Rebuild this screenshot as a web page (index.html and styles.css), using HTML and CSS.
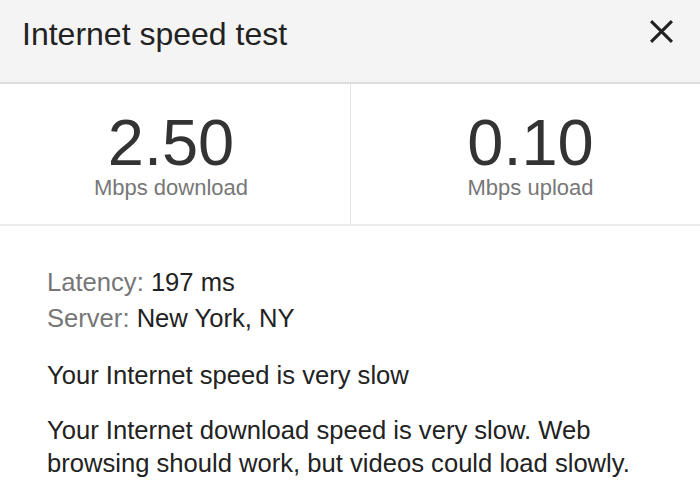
FILE: index.html
```html
<!DOCTYPE html>
<html>
<head>
<meta charset="utf-8">
<link rel="stylesheet" href="styles.css">
</head>
<body>
<div class="card">
  <header class="head">
    <h1 class="title">Internet speed test</h1>
    <button class="close" aria-label="Close">
      <svg width="25" height="25" viewBox="0 0 24 24"><path d="M2 2 L22 22 M22 2 L2 22" stroke="#222" stroke-width="2.9" fill="none"/></svg>
    </button>
  </header>
  <section class="stats">
    <div class="stat stat-down">
      <div class="num">2.50</div>
      <div class="unit">Mbps download</div>
    </div>
    <div class="stat stat-up">
      <div class="num">0.10</div>
      <div class="unit">Mbps upload</div>
    </div>
  </section>
  <section class="info">
    <div class="meta">
      <div class="row"><span class="lbl">Latency:</span> <span class="val">197 ms</span></div>
      <div class="row"><span class="lbl">Server:</span> <span class="val">New York, NY</span></div>
    </div>
    <p class="verdict">Your Internet speed is very slow</p>
    <p class="desc">Your Internet download speed is very slow. Web browsing should work, but videos could load slowly.</p>
  </section>
</div>
</body>
</html>
```

FILE: styles.css
```css
* { box-sizing: border-box; }
html, body { margin: 0; padding: 0; background: #fff; }
body { font-family: "Liberation Sans", Arial, sans-serif; color: #222; width: 700px; height: 490px; overflow: hidden; }
.head {
  height: 84px;
  background: #f4f4f4;
  border-bottom: 2px solid #dcdcdc;
  display: flex;
  align-items: center;
  justify-content: space-between;
  padding: 0 26px 0 22px;
}
.title { margin: 0 0 14px; font-weight: normal; font-size: 32px; color: #222; }
.close { border: 0; background: none; padding: 0; margin-bottom: 19px; display: flex; }
.stats {
  display: grid;
  grid-template-columns: 350px 350px;
  height: 142px;
  border-bottom: 2px solid #ececec;
}
.stat { display: flex; flex-direction: column; align-items: center; padding-top: 27px; }
.stat-down { padding-right: 8px; }
.stat-up { border-left: 1px solid #e6e6e6; padding-left: 10px; }
.num { font-size: 65px; line-height: 64px; color: #333; }
.unit { font-size: 22px; line-height: 26px; color: #777; }
.info { padding: 38px 47px 0; }
.meta { font-size: 25.6px; line-height: 36px; }
.lbl { color: #777; }
.val { color: #222; }
.verdict { margin: 23px 0 0; font-size: 25.6px; line-height: 32px; }
.desc { margin: 23px 0 0; font-size: 25.6px; line-height: 33px; width: 600px; }
```
